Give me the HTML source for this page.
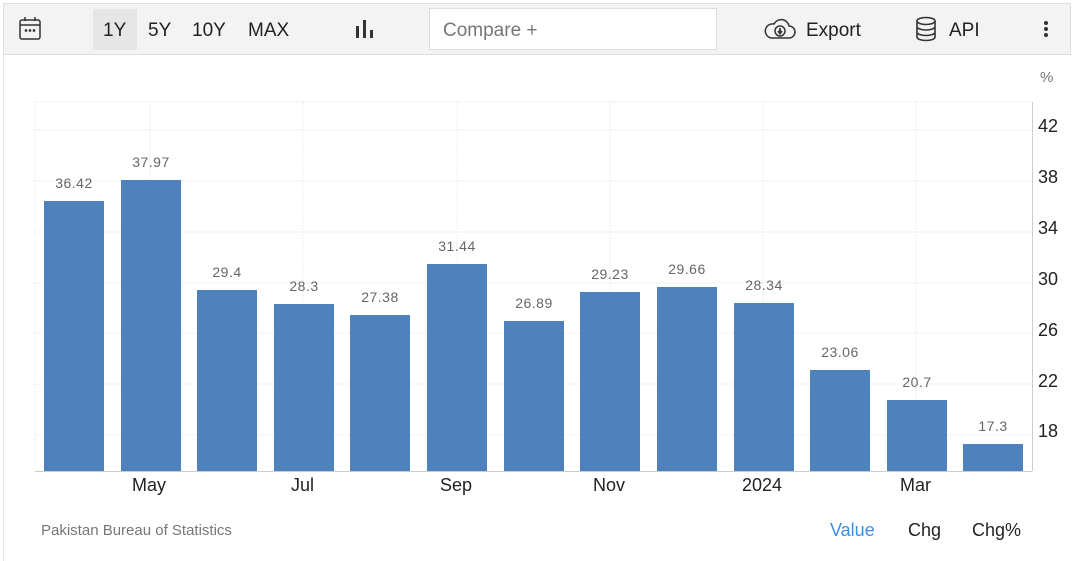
<!DOCTYPE html><html><head><style>
body{margin:0;width:1072px;height:561px;background:#fff;font-family:"Liberation Sans",sans-serif;overflow:hidden;position:relative}
.tb{position:absolute;left:3px;top:3px;width:1066px;height:50px;background:#f3f3f3;border:1px solid #ddd}
.t{position:absolute;font-size:19px;color:#222;top:20px}
.lbl{position:absolute;font-size:14px;color:#666;text-align:center;width:80px;letter-spacing:.5px}
.ax{position:absolute;font-size:18px;color:#222}
.bar{position:absolute;background:#4f81bd;width:60px}
</style></head><body>
<div class="tb"></div>
<div style="position:absolute;left:3px;top:54px;width:1px;height:507px;background:#e5e5e5"></div>
<svg style="position:absolute;left:18px;top:16px" width="26" height="26" viewBox="0 0 26 26" fill="none" stroke="#333" stroke-width="1.5"><rect x="2" y="4" width="20" height="19" rx="2"/><line x1="2" y1="9" x2="22" y2="9"/><line x1="7" y1="1" x2="7" y2="5"/><line x1="17" y1="1" x2="17" y2="5"/><circle cx="8" cy="14.5" r=".6" fill="#333"/><circle cx="12" cy="14.5" r=".6" fill="#333"/><circle cx="16" cy="14.5" r=".6" fill="#333"/></svg>
<div style="position:absolute;left:93px;top:9px;width:44px;height:41px;background:#e6e6e6"></div>
<div class="t" style="left:103px">1Y</div><div class="t" style="left:148px">5Y</div><div class="t" style="left:192px">10Y</div><div class="t" style="left:248px">MAX</div>
<svg style="position:absolute;left:354px;top:19px" width="22" height="22"><rect x="2" y="7" width="3" height="12" fill="#333"/><rect x="9" y="1" width="3" height="18" fill="#333"/><rect x="16" y="11" width="3" height="8" fill="#333"/></svg>
<div style="position:absolute;left:429px;top:8px;width:286px;height:40px;background:#fff;border:1px solid #ddd"></div>
<div class="t" style="left:443px;color:#777">Compare +</div>
<svg style="position:absolute;left:763px;top:18px" width="34" height="22" viewBox="0 0 34 22" fill="none" stroke="#333" stroke-width="1.5"><path d="M8 20h18a6 6 0 0 0 0-12 8 8 0 0 0-15-2 7 7 0 0 0-3 14z"/><circle cx="17" cy="13" r="5"/><path d="M17 10v5M15 13l2 2.5 2-2.5" stroke-width="1.8"/></svg>
<div class="t" style="left:806px">Export</div>
<svg style="position:absolute;left:914px;top:16px" width="24" height="26" viewBox="0 0 24 26" fill="none" stroke="#333" stroke-width="1.6"><ellipse cx="12" cy="5" rx="9" ry="3.5"/><path d="M3 5v16c0 2 4 3.5 9 3.5s9-1.5 9-3.5V5M3 10.5c0 2 4 3.5 9 3.5s9-1.5 9-3.5M3 16c0 2 4 3.5 9 3.5s9-1.5 9-3.5"/></svg>
<div class="t" style="left:949px">API</div>
<div style="position:absolute;left:1044px;top:21px;width:4px;height:4px;border-radius:50%;background:#333;box-shadow:0 6px 0 #333,0 12px 0 #333"></div>
<svg style="position:absolute;left:0;top:0" width="1072" height="561">
<g stroke="#ececec" stroke-dasharray="2,1">
<line x1="35" y1="102" x2="1032" y2="102"/>
<line x1="35" y1="130" x2="1032" y2="130"/><line x1="35" y1="181" x2="1032" y2="181"/><line x1="35" y1="232" x2="1032" y2="232"/><line x1="35" y1="283" x2="1032" y2="283"/><line x1="35" y1="333" x2="1032" y2="333"/><line x1="35" y1="384" x2="1032" y2="384"/><line x1="35" y1="435" x2="1032" y2="435"/>
<line x1="35" y1="102" x2="35" y2="471"/><line x1="150" y1="102" x2="150" y2="471"/><line x1="303" y1="102" x2="303" y2="471"/><line x1="457" y1="102" x2="457" y2="471"/><line x1="610" y1="102" x2="610" y2="471"/><line x1="763" y1="102" x2="763" y2="471"/><line x1="916" y1="102" x2="916" y2="471"/>
</g>
<line x1="1032.5" y1="102" x2="1032.5" y2="471" stroke="#ccc"/>
<line x1="35" y1="471.5" x2="1032" y2="471.5" stroke="#ccc"/>
</svg>
<div class="bar" style="left:44px;top:201px;height:270px"></div>
<div class="bar" style="left:121px;top:180px;height:291px"></div>
<div class="bar" style="left:197px;top:290px;height:181px"></div>
<div class="bar" style="left:274px;top:304px;height:167px"></div>
<div class="bar" style="left:350px;top:315px;height:156px"></div>
<div class="bar" style="left:427px;top:264px;height:207px"></div>
<div class="bar" style="left:504px;top:321px;height:150px"></div>
<div class="bar" style="left:580px;top:292px;height:179px"></div>
<div class="bar" style="left:657px;top:287px;height:184px"></div>
<div class="bar" style="left:734px;top:303px;height:168px"></div>
<div class="bar" style="left:810px;top:370px;height:101px"></div>
<div class="bar" style="left:887px;top:400px;height:71px"></div>
<div class="bar" style="left:963px;top:444px;height:27px"></div>
<div class="lbl" style="left:34px;top:175px">36.42</div>
<div class="lbl" style="left:111px;top:154px">37.97</div>
<div class="lbl" style="left:187px;top:264px">29.4</div>
<div class="lbl" style="left:264px;top:278px">28.3</div>
<div class="lbl" style="left:340px;top:289px">27.38</div>
<div class="lbl" style="left:417px;top:238px">31.44</div>
<div class="lbl" style="left:494px;top:295px">26.89</div>
<div class="lbl" style="left:570px;top:266px">29.23</div>
<div class="lbl" style="left:647px;top:261px">29.66</div>
<div class="lbl" style="left:724px;top:277px">28.34</div>
<div class="lbl" style="left:800px;top:344px">23.06</div>
<div class="lbl" style="left:877px;top:374px">20.7</div>
<div class="lbl" style="left:953px;top:418px">17.3</div>
<div style="position:absolute;left:1040px;top:69px;font-size:15px;color:#777">%</div>
<div class="ax" style="left:1038px;top:116px">42</div><div class="ax" style="left:1038px;top:167px">38</div><div class="ax" style="left:1038px;top:218px">34</div><div class="ax" style="left:1038px;top:269px">30</div><div class="ax" style="left:1038px;top:320px">26</div><div class="ax" style="left:1038px;top:371px">22</div><div class="ax" style="left:1038px;top:421px">18</div>
<div class="ax" style="left:132px;top:475px">May</div><div class="ax" style="left:291px;top:475px">Jul</div><div class="ax" style="left:440px;top:475px">Sep</div><div class="ax" style="left:593px;top:475px">Nov</div><div class="ax" style="left:742px;top:475px">2024</div><div class="ax" style="left:900px;top:475px">Mar</div>
<div style="position:absolute;left:41px;top:522px;font-size:15px;color:#777">Pakistan Bureau of Statistics</div>
<div class="ax" style="left:830px;top:520px;color:#3d8fe0">Value</div>
<div class="ax" style="left:908px;top:520px">Chg</div>
<div class="ax" style="left:972px;top:520px">Chg%</div>
</body></html>
